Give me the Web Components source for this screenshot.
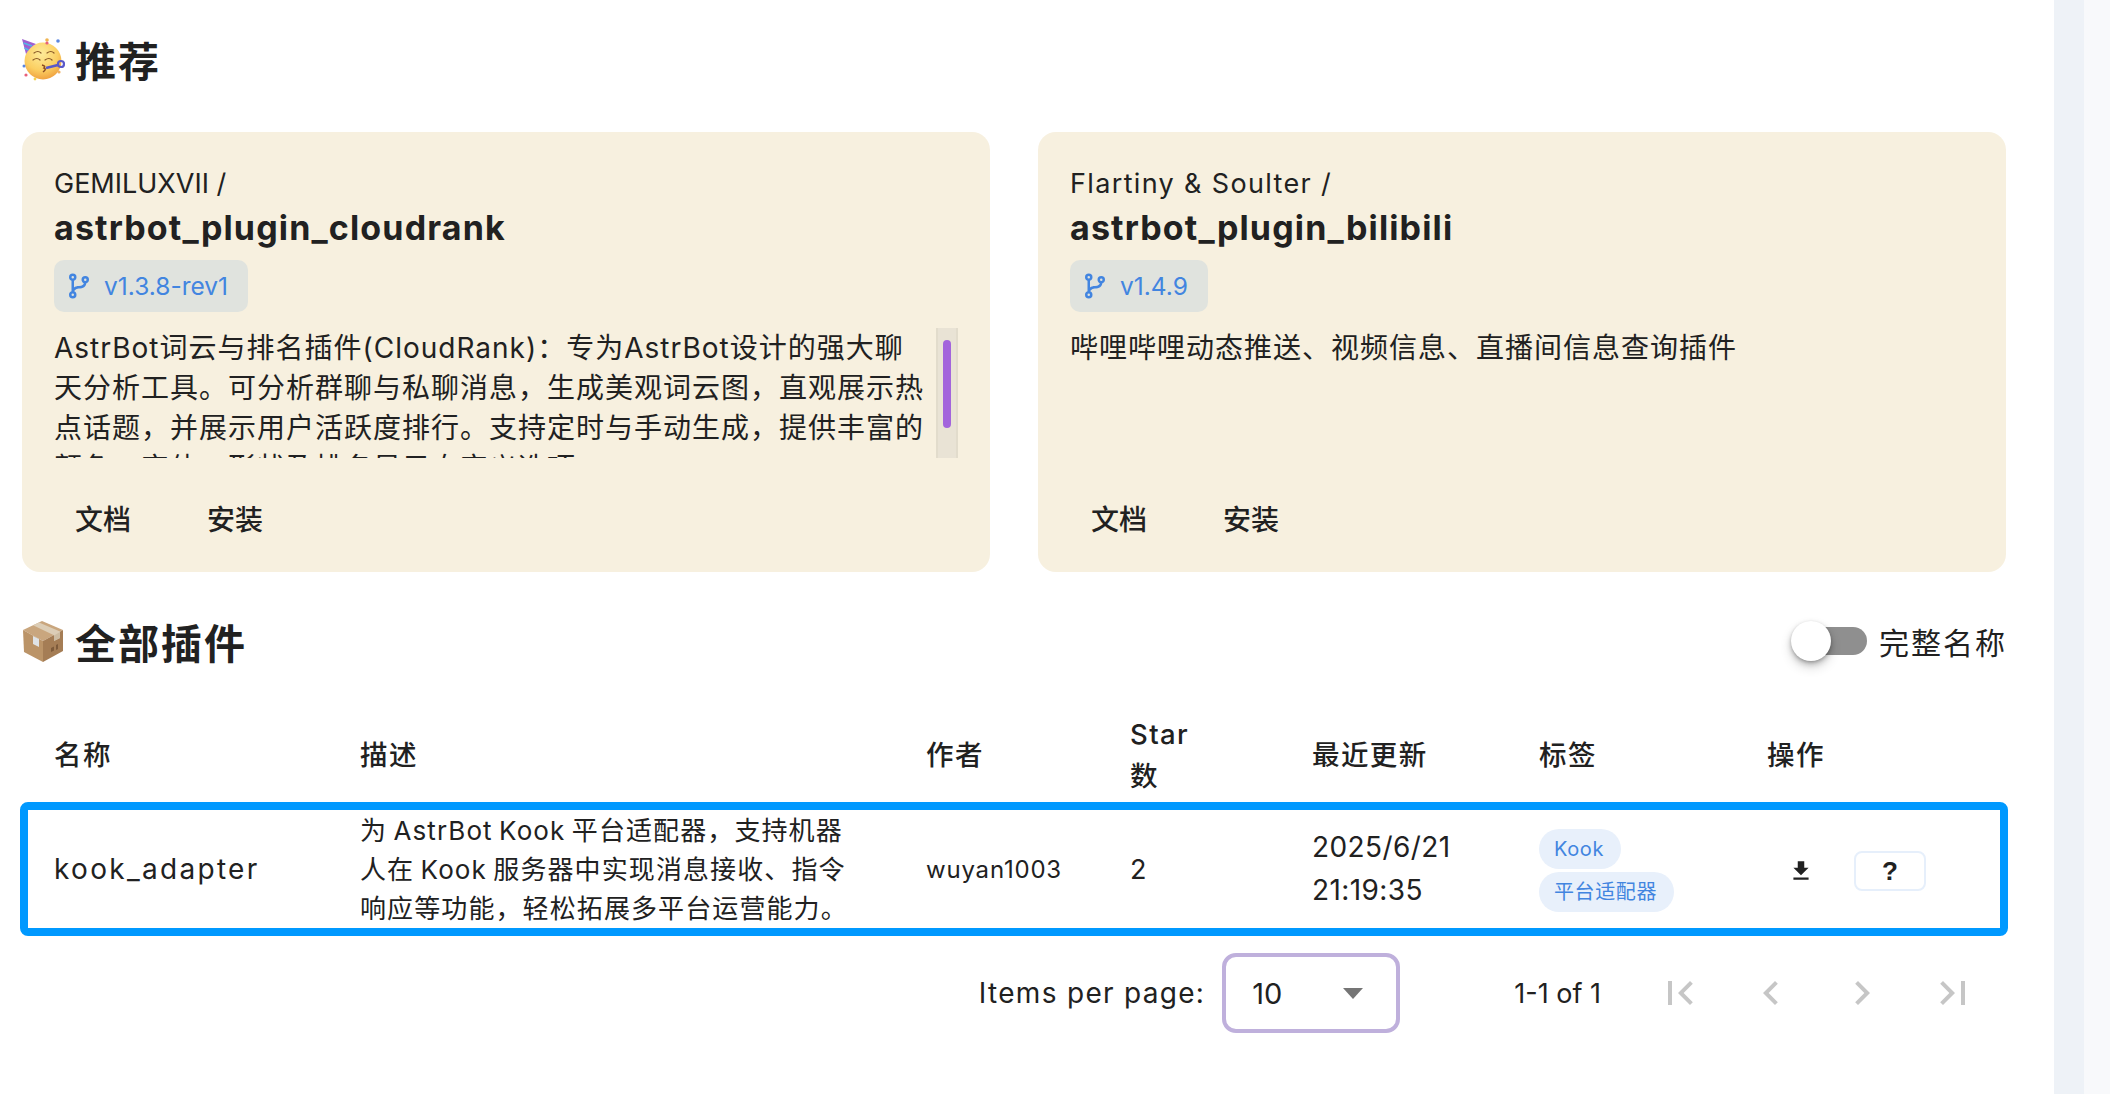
<!DOCTYPE html>
<html lang="zh">
<head>
<meta charset="utf-8">
<title>插件市场</title>
<style>
  html, body { margin: 0; height: 100%; overflow: hidden; background: #fff; }
  body { display: flex; font-family: Inter, "Noto Sans CJK SC", sans-serif; color: #212121; }
  market-page { flex: 1; min-width: 0; }
</style>
</head>
<body>
<market-page>
  <section-title style="--pad-top: 29px; --pad-bottom: 43px">
    <party-emoji slot="icon"></party-emoji>
    推荐
  </section-title>
  <div style="display: grid; grid-template-columns: 968px 968px; column-gap: 48px">
    <plugin-card author="GEMILUXVII" name="astrbot_plugin_cloudrank" version="v1.3.8-rev1" scroll>
      AstrBot词云与排名插件(CloudRank)：专为AstrBot设计的强大聊天分析工具。可分析群聊与私聊消息，生成美观词云图，直观展示热点话题，并展示用户活跃度排行。支持定时与手动生成，提供丰富的颜色、字体、形状及排名显示自定义选项。
    </plugin-card>
    <plugin-card author="Flartiny &amp; Soulter" name="astrbot_plugin_bilibili" version="v1.4.9" style="--author-spacing: 1.35px">
      哔哩哔哩动态推送、视频信息、直播间信息查询插件
    </plugin-card>
  </div>
  <section-title style="--pad-top: 39px; --pad-bottom: 30px">
    <box-emoji slot="icon"></box-emoji>
    全部插件
    <name-toggle slot="end">完整名称</name-toggle>
  </section-title>
  <plugin-table></plugin-table>
  <table-pager></table-pager>
</market-page>
<side-rail></side-rail>

<script>
// mdi paths used around the page
const ICONS = {
  branch: 'M13,14C9.64,14 8.54,15.35 8.18,16.24C9.25,16.7 10,17.76 10,19A3,3 0 0,1 7,22A3,3 0 0,1 4,19C4,17.69 4.83,16.58 6,16.17V7.83C4.83,7.42 4,6.31 4,5A3,3 0 0,1 7,2A3,3 0 0,1 10,5C10,6.31 9.17,7.42 8,7.83V13.12C8.88,12.47 10.18,12 12,12C14.67,12 15.56,10.66 15.85,9.77C14.77,9.32 14,8.25 14,7A3,3 0 0,1 17,4A3,3 0 0,1 20,7C20,8.34 19.12,9.5 17.91,9.86C17.65,11.29 16.68,14 13,14M7,18A1,1 0 0,0 6,19A1,1 0 0,0 7,20A1,1 0 0,0 8,19A1,1 0 0,0 7,18M7,4A1,1 0 0,0 6,5A1,1 0 0,0 7,6A1,1 0 0,0 8,5A1,1 0 0,0 7,4M17,6A1,1 0 0,0 16,7A1,1 0 0,0 17,8A1,1 0 0,0 18,7A1,1 0 0,0 17,6Z',
  download: 'M5,20H19V18H5M19,9H15V3H9V9H5L12,16L19,9Z',
  first: 'M18.41,16.59L13.82,12L18.41,7.41L17,6L11,12L17,18L18.41,16.59M6,6H8V18H6V6Z',
  prev: 'M15.41,16.58L10.83,12L15.41,7.41L14,6L8,12L14,18L15.41,16.58Z',
  next: 'M8.59,16.58L13.17,12L8.59,7.41L10,6L16,12L10,18L8.59,16.58Z',
  last: 'M5.59,7.41L10.17,12L5.59,16.59L7,18L13,12L7,6L5.59,7.41M16,6H18V18H16V6Z'
};
const icon = (name, size) => `<svg width="${size}" height="${size}" viewBox="0 0 24 24" fill="currentColor"><path d="${ICONS[name]}"></path></svg>`;

customElements.define('market-page', class extends HTMLElement {
  constructor() {
    super();
    this.attachShadow({ mode: 'open' }).innerHTML = `
      <style>:host { display: block; box-sizing: border-box; padding: 0 48px 0 22px; }</style>
      <slot></slot>`;
  }
});

customElements.define('side-rail', class extends HTMLElement {
  constructor() {
    super();
    this.attachShadow({ mode: 'open' }).innerHTML = `
      <style>
        :host { display: flex; flex: none; width: 56px; }
        .a { width: 30px; background: #eef2f7; }
        .b { flex: 1; background: #f8f9fb; }
      </style>
      <div class="a"></div><div class="b"></div>`;
  }
});

customElements.define('section-title', class extends HTMLElement {
  constructor() {
    super();
    this.attachShadow({ mode: 'open' }).innerHTML = `
      <style>
        :host { display: flex; align-items: center; height: 60px; padding: var(--pad-top) 0 var(--pad-bottom); }
        .label { font-size: 41px; font-weight: 700; letter-spacing: 2px; color: #212121; margin-left: 10px; flex: 1; }
      </style>
      <slot name="icon"></slot>
      <div class="label"><slot></slot></div>
      <slot name="end"></slot>`;
  }
});

customElements.define('party-emoji', class extends HTMLElement {
  constructor() {
    super();
    this.attachShadow({ mode: 'open' }).innerHTML = `
      <style>:host { display: block; width: 43px; height: 43px; } svg { display: block; }</style>
      <svg width="43" height="43" viewBox="0 0 43 43">
        <defs>
          <radialGradient id="f" cx="45%" cy="30%" r="75%">
            <stop offset="0" stop-color="#fdeb9a"></stop>
            <stop offset=".6" stop-color="#fbcf62"></stop>
            <stop offset="1" stop-color="#ee9a3a"></stop>
          </radialGradient>
        </defs>
        <circle cx="21" cy="23" r="18.5" fill="url(#f)"></circle>
        <path d="M0 1L14 6Q8 9 4 16Z" fill="#a05fd0"></path>
        <path d="M1.500 5L10 8M2.500 10L6.500 12" stroke="#52b5e8" stroke-width="1.500"></path>
        <path d="M12 15q4 -3 7 0M25 15q4 -3 7 0M11 22q4 -3 7 0" fill="none" stroke="#8a5a28" stroke-width="1.200" stroke-linecap="round"></path>
        <path d="M23 22q4 -3 7 0" fill="none" stroke="#8a5a28" stroke-width="1.200" stroke-linecap="round"></path>
        <path d="M20 27q4 1 2 3q3 1 -1 4" fill="none" stroke="#8a4a20" stroke-width="1.500"></path>
        <path d="M24 30L36 27" stroke="#5a58c8" stroke-width="2.500"></path>
        <circle cx="39" cy="26" r="3" fill="none" stroke="#5a58c8" stroke-width="2.200"></circle>
        <circle cx="25" cy="2" r="1.800" fill="#f0b450"></circle>
        <circle cx="25" cy="5" r="1.600" fill="#e8607a"></circle>
        <circle cx="36" cy="3" r="1.800" fill="#5a86e0"></circle>
        <circle cx="2" cy="28" r="1.500" fill="#5a86e0"></circle>
        <circle cx="4" cy="37" r="1.600" fill="#e8607a"></circle>
        <circle cx="13" cy="41" r="1.400" fill="#f4d050"></circle>
        <circle cx="37" cy="34" r="1.600" fill="#f0b060"></circle>
      </svg>`;
  }
});

customElements.define('box-emoji', class extends HTMLElement {
  constructor() {
    super();
    this.attachShadow({ mode: 'open' }).innerHTML = `
      <style>:host { display: block; width: 43px; height: 43px; } svg { display: block; }</style>
      <svg width="43" height="43" viewBox="0 0 43 43">
        <path d="M1 10L20 1L41 10L21 21Z" fill="#c9a67e"></path>
        <path d="M1 10L21 21V42L2 32Z" fill="#bb9468"></path>
        <path d="M21 21L41 10V31L21 42Z" fill="#a57d55"></path>
        <path d="M11 5.300L32 15.300V21L38 18V11.500L17 2.500Z" fill="#dccdb6"></path>
        <path d="M32 15.500L38 12V18L32 21Z" fill="#cdbca2"></path>
        <path d="M11 16L17 19V27L11 24Z" fill="#dfe3e6"></path>
        <path d="M29 28l3 -1.500v4l-3 1.500zM34 25l2 -1v5l-2 1z" fill="#7d5a3a"></path>
      </svg>`;
  }
});

customElements.define('name-toggle', class extends HTMLElement {
  constructor() {
    super();
    this.attachShadow({ mode: 'open' }).innerHTML = `
      <style>
        :host { display: flex; align-items: center; gap: 12px; font-size: 30px; letter-spacing: 2px; margin-right: -1px; }
        .track { position: relative; width: 73px; height: 28px; border-radius: 14px; background: #8f8f8f; }
        .thumb { position: absolute; left: -3px; top: -6px; width: 40px; height: 40px; border-radius: 50%; background: #fff;
          box-shadow: 0 3px 6px -1px rgba(0,0,0,.3), 0 6px 12px rgba(0,0,0,.16), 0 1px 3px rgba(0,0,0,.14); }
      </style>
      <div class="track"><div class="thumb"></div></div>
      <slot></slot>`;
  }
});

customElements.define('plugin-card', class extends HTMLElement {
  constructor() {
    super();
    const scroll = this.hasAttribute('scroll');
    this.attachShadow({ mode: 'open' }).innerHTML = `
      <style>
        :host { display: block; box-sizing: border-box; height: 440px; padding: 32px 32px 28px; background: #f7f0df; border-radius: 18px; }
        .author { font-size: 27px; line-height: 40px; letter-spacing: var(--author-spacing, 0); }
        .name { font-size: 34px; line-height: 48px; font-weight: 700; letter-spacing: 1.150px; }
        .chip { display: inline-flex; align-items: center; height: 52px; margin-top: 8px; padding: 0 20px 0 10px; gap: 10px;
          background: #e0e3de; border-radius: 10px; color: #4285e0; font-size: 24.500px; vertical-align: top; }
        .chip svg { display: block; }
        .desc { display: flex; height: 130px; margin-top: 16px; }
        .text { flex: 1; overflow: hidden; font-size: 28px; line-height: 40px; letter-spacing: 1px; margin-right: 10px; }
        .bar { flex: none; width: 22px; box-sizing: border-box; padding: 12px 5px 30px; background: #e9e3d5;
          border-left: 2px solid #e2dccc; border-right: 2px solid #e2dccc; margin-left: -2px; }
        .bar div { height: 88px; border-radius: 4px; background: #a364dc; }
        .actions { display: flex; gap: 34px; margin-top: 38px; }
        .btn { height: 48px; line-height: 48px; padding: 0 21px; font-size: 28px; font-weight: 500; }
      </style>
      <div class="author">${this.getAttribute('author').replace('&', '&amp;')} /</div>
      <div class="name">${this.getAttribute('name')}</div>
      <div class="chip">${icon('branch', 30)}<span>${this.getAttribute('version')}</span></div>
      <div class="desc">
        <div class="text"><slot></slot></div>
        ${scroll ? '<div class="bar"><div></div></div>' : ''}
      </div>
      <div class="actions"><div class="btn">文档</div><div class="btn">安装</div></div>`;
  }
});

customElements.define('plugin-table', class extends HTMLElement {
  constructor() {
    super();
    this.attachShadow({ mode: 'open' }).innerHTML = `
      <style>
        :host { display: block; margin: 0 -2px; }
        .head, .row { display: grid; grid-template-columns: 332px 566px 204px 182px 227px 228px 1fr; align-items: center; border: 8px solid transparent; }
        .head { box-sizing: border-box; height: 99px; margin-top: 4px; margin-bottom: -2px; font-size: 27.500px; font-weight: 500; line-height: 42px; letter-spacing: 1.400px; }
        .head > :first-child, .row > :first-child { padding-left: 26px; }
        .row { box-sizing: border-box; height: 134px; border-color: #0099ff; border-radius: 8px; position: relative; }
        .name { font-size: 28px; letter-spacing: 2.300px; }
        .desc { font-size: 26px; line-height: 39px; letter-spacing: 1.100px; word-spacing: -2px; padding-right: 70px; }
        .author { font-size: 24px; letter-spacing: .8px; }
        .star { font-size: 27px; }
        .date { font-size: 28px; line-height: 43px; letter-spacing: .4px; }
        .tags { display: flex; flex-direction: column; align-items: flex-start; gap: 3px; padding-top: 3px; }
        .tag { height: 40px; line-height: 40px; padding: 0 17px 0 15px; border-radius: 20px; background: #e8f0fb; color: #4285e0; font-size: 20px; letter-spacing: .6px; }
        .ops { display: flex; align-items: center; padding: 3px 0 0 21px; gap: 40px; }
        .ops svg { display: block; }
        .help { box-sizing: border-box; width: 72px; height: 40px; border: 2px solid #e6effb; border-radius: 8px; text-align: center;
          font: 700 26px/36px "Liberation Sans", sans-serif; }
      </style>
      <div class="head">
        <div>名称</div><div>描述</div><div>作者</div><div>Star<br>数</div><div>最近更新</div><div>标签</div><div>操作</div>
      </div>
      <div class="row">
        <div class="name">kook_adapter</div>
        <div class="desc">为 AstrBot Kook 平台适配器，支持机器人在 Kook 服务器中实现消息接收、指令响应等功能，轻松拓展多平台运营能力。</div>
        <div class="author">wuyan1003</div>
        <div class="star">2</div>
        <div class="date">2025/6/21<br>21:19:35</div>
        <div class="tags"><div class="tag">Kook</div><div class="tag">平台适配器</div></div>
        <div class="ops">${icon('download', 26)}<div class="help">?</div></div>
      </div>`;
  }
});

customElements.define('table-pager', class extends HTMLElement {
  constructor() {
    super();
    this.attachShadow({ mode: 'open' }).innerHTML = `
      <style>
        :host { display: flex; align-items: center; justify-content: flex-end; margin-top: 17px; padding-right: 8px; font-size: 27px; }
        .label { font-size: 28px; letter-spacing: 1.300px; }
        .select { box-sizing: border-box; display: flex; align-items: center; justify-content: space-between; width: 178px; height: 80px; margin-left: 17px;
          padding: 0 33px 0 26px; border: 4px solid #bfb0dc; border-radius: 14px; font-size: 29px; }
        .arrow { width: 0; height: 0; border-left: 10px solid transparent; border-right: 10px solid transparent; border-top: 11px solid #757575; }
        .range { margin: 0 33px 0 114px; }
        .nav { width: 91px; height: 48px; display: flex; justify-content: center; color: #c6c6c6; }
        svg { display: block; }
      </style>
      <span class="label">Items per page:</span>
      <div class="select"><span>10</span><div class="arrow"></div></div>
      <span class="range">1-1 of 1</span>
      ${['first', 'prev', 'next', 'last'].map(n => `<div class="nav">${icon(n, 48)}</div>`).join('')}`;
  }
});
</script>
</body>
</html>
